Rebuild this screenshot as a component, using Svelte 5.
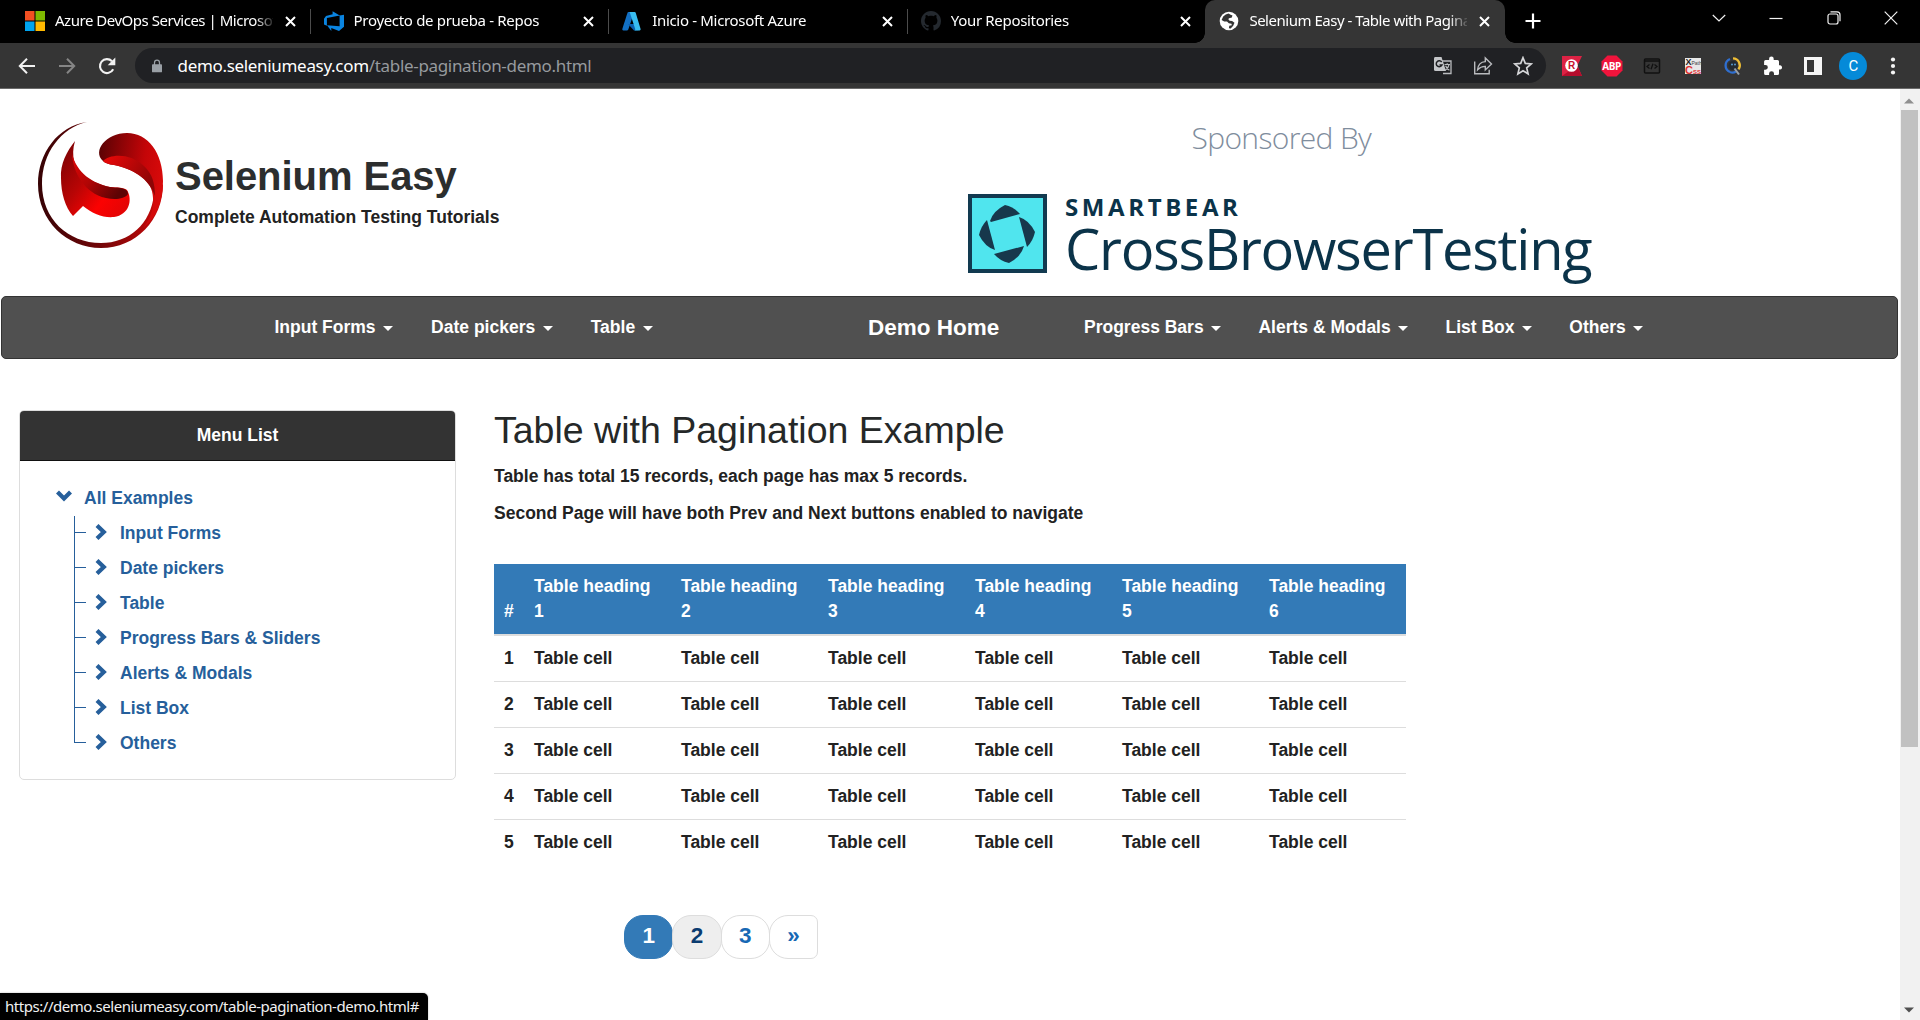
<script>
  const tabs = [
    { icon: 'ms', title: 'Azure DevOps Services | Microsoft', long: true },
    { icon: 'devops', title: 'Proyecto de prueba - Repos' },
    { icon: 'azure', title: 'Inicio - Microsoft Azure' },
    { icon: 'github', title: 'Your Repositories' },
    { icon: 'globe', title: 'Selenium Easy - Table with Pagination', active: true, long: true }
  ];
  const navLeft = ['Input Forms', 'Date pickers', 'Table'];
  const navRight = ['Progress Bars', 'Alerts & Modals', 'List Box', 'Others'];
  const menu = ['Input Forms', 'Date pickers', 'Table', 'Progress Bars & Sliders', 'Alerts & Modals', 'List Box', 'Others'];
  const cols = [1, 2, 3, 4, 5, 6];
  const rows = [1, 2, 3, 4, 5];
</script>

<div class="window">
  <header class="tabstrip">
    {#each tabs as tab}
      <div class="tab" class:active={tab.active}>
        <span class="favicon">
          {#if tab.icon === 'ms'}
            <svg width="20" height="20" viewBox="0 0 20 20"><path fill="#f25022" d="M0 0h9.5v9.5H0z" /><path fill="#7fba00" d="M10.5 0H20v9.5h-9.5z" /><path fill="#00a4ef" d="M0 10.5h9.5V20H0z" /><path fill="#ffb900" d="M10.5 10.5H20V20h-9.5z" /></svg>
          {:else if tab.icon === 'devops'}
            <svg width="20" height="20" viewBox="0 0 20 20"><path fill="#0a84e0" d="M20 3.7v12.1l-5 4.1-7.7-2.8v2.8L3 14.2l12.6 1V4.4zM15.700 4.500 8.600 0.300v2.900L2 5.100 0 7.700v5.800l2.900 1.200V6.900z" /></svg>
          {:else if tab.icon === 'azure'}
            <svg width="20" height="20" viewBox="0 0 20 20"><path fill="#1270c4" d="M6.500 1h5.700L6.300 18.600q-.3.800-1.100.8H1.300Q0 19.400.3 18.100L5.500 1.800Q5.800 1 6.500 1z" /><path fill="#0a60b0" d="M6 13h8l2.500 6.300L12 19.400z" /><path fill="#38bdf0" d="M7 1h5.700q.7 0 1 .8l4.900 16.300q.3 1.300-1 1.300h-5.200q1.200-.3.800-1.500L7.900 1.700Q7.700 1 7 1z" /></svg>
          {:else if tab.icon === 'github'}
            <svg width="20" height="20" viewBox="0 0 16 16"><path fill="#24292f" d="M8 0C3.580 0 0 3.580 0 8c0 3.540 2.290 6.530 5.470 7.590.4.070.55-.17.55-.38 0-.19-.01-.82-.01-1.490-2.010.37-2.530-.49-2.690-.94-.09-.23-.48-.94-.82-1.130-.28-.15-.68-.52-.01-.53.63-.01 1.080.58 1.230.82.72 1.210 1.870.87 2.330.66.07-.52.28-.87.51-1.070-1.780-.2-3.640-.89-3.640-3.950 0-.87.31-1.590.82-2.150-.08-.2-.36-1.020.08-2.120 0 0 .67-.21 2.200.82.64-.18 1.320-.27 2-.27s1.360.09 2 .27c1.530-1.040 2.200-.82 2.200-.82.44 1.100.16 1.920.08 2.120.51.56.82 1.270.82 2.150 0 3.070-1.870 3.750-3.650 3.950.29.25.54.73.54 1.480 0 1.070-.01 1.930-.01 2.200 0 .21.15.46.55.38A8.010 8.010 0 0 0 16 8c0-4.420-3.580-8-8-8z" /></svg>
          {:else}
            <svg width="20" height="20" viewBox="0 0 20 20"><circle cx="10" cy="10" r="9.300" fill="#fff" /><path fill="#353535" d="M9.500 2.600q-3 .6-5.300 2.900l-1.600 3.600 2.600 1.400 2.800.1 1.800 1.700 2.700.4.300 1.600-2.500.4-.4 2.500 1.800.2 2.500-2.700 1.300-3-2.400-1.700-2.500-.2-1.400-1.800 1.400-1.100 2-.2.900-2.100-1.900-.9z" /></svg>
          {/if}
        </span>
        <span class="tab-title" class:long={tab.long}>{tab.title}</span>
        <svg class="tab-close" width="11" height="11" viewBox="0 0 11 11"><path d="M1 1l9 9M10 1l-9 9" stroke="#fff" stroke-width="2" /></svg>
      </div>
    {/each}
    <svg class="plus" width="16" height="16" viewBox="0 0 16 16"><path d="M8 .5v15M.5 8h15" stroke="#fff" stroke-width="2.200" /></svg>
    <div class="controls">
      <svg width="14" height="14" viewBox="0 0 14 14"><path d="M.8 4 7 10l6.200-6" /></svg>
      <svg width="14" height="14" viewBox="0 0 14 14"><path d="M.5 7.500h13" /></svg>
      <svg width="14" height="14" viewBox="0 0 14 14"><rect x="1" y="3" width="10" height="10" rx="2" /><path d="M3.500.8H10q3 0 3 3v6.500" /></svg>
      <svg width="14" height="14" viewBox="0 0 14 14"><path d="M.7.700l12.600 12.600M13.300.700.700 13.300" /></svg>
    </div>
  </header>

  <div class="toolbar">
    <svg class="history" width="18" height="18" viewBox="0 0 18 18"><path d="M17 9H2M9 1.800 1.800 9 9 16.200" fill="none" stroke="#f1f1f1" stroke-width="2" /></svg>
    <svg class="history" width="18" height="18" viewBox="0 0 18 18"><path d="M1 9h15M9 1.800 16.200 9 9 16.200" fill="none" stroke="#858585" stroke-width="2" /></svg>
    <svg class="history" width="18" height="18" viewBox="0 0 18 18"><path d="M15.200 12.300A7 7 0 1 1 14 4.200" fill="none" stroke="#f1f1f1" stroke-width="2.100" /><path d="M17.300.5v7.700H9.700z" fill="#f1f1f1" /></svg>
    <div class="omnibox">
      <svg class="lock" width="10" height="14" viewBox="0 0 12 16"><path d="M3 7V4a3 3 0 0 1 6 0v3" fill="none" stroke="#9aa0a6" stroke-width="1.500" /><rect y="6" width="12" height="9.500" rx="1" fill="#9aa0a6" /></svg>
      <span class="url">demo.seleniumeasy.com<i>/table-pagination-demo.html</i></span>
      <div class="omni-icons">
        <svg width="20" height="20" viewBox="0 0 20 20"><path d="M8 5h10v12.500H10" fill="none" stroke="#b9bbbe" stroke-width="1.300" /><path d="M2 1h6.500l4.500 14H2.500Q1 15 1 13.500V2.500Q1 1 2 1z" fill="#c4c6c9" /><path d="M8.700 6A3 3 0 1 0 9 9H6.500" fill="none" stroke="#202124" stroke-width="1.500" /><path d="M11.500 8.500h5.500M14.200 7.300v1.200M12.300 14.200q3.200-2 3.700-5.500M12.600 9.800q1 2.800 3.800 4.400" fill="none" stroke="#b9bbbe" stroke-width="1.200" /></svg>
        <svg width="20" height="20" viewBox="0 0 20 20"><g fill="none" stroke="#b9bbbe" stroke-width="1.400"><path d="M1.700 5.500v12.300h14.500v-4" /><path d="M12.300 2v3.600Q5.300 6 4.600 13.700q3.200-3.400 7.700-3.300v3.500l6.200-5.900z" /></g></svg>
        <svg width="20" height="20" viewBox="0 0 20 20"><path d="M10 1.700l2.300 5.700 6 .5-4.600 4 1.400 6-5.100-3.200-5.100 3.200 1.400-6-4.600-4 6-.5z" fill="none" stroke="#d5d6d8" stroke-width="1.700" /></svg>
      </div>
    </div>
    <div class="extensions">
      <svg width="22" height="22" viewBox="0 0 22 22"><path d="M1 1h20l-4.500 9.500L21 21H1z" fill="#dc2244" /><path d="M1 21 16 10.500 21 21z" fill="#b50d2c" /><circle cx="10.500" cy="10.500" r="6.300" fill="#fff" /><text x="7" y="14.300" class="ext-r">R</text></svg>
      <svg width="22" height="22" viewBox="0 0 22 22"><path d="M6.500.5h9l6 6v9l-6 6h-9l-6-6v-9z" fill="#f0143c" /><text x="1.300" y="14.500" class="ext-abp">ABP</text></svg>
      <svg width="22" height="22" viewBox="0 0 22 22"><rect x="3.500" y="4" width="15" height="14" rx="1" fill="none" stroke="#111" stroke-width="1.500" /><path d="M3 6h16M8.500 9.500l-2.500 2 2.500 2M13.500 9.500l2.500 2-2.500 2M12 8.800l-2 5.500" fill="none" stroke="#111" stroke-width="1.300" /></svg>
      <svg width="22" height="22" viewBox="0 0 22 22"><rect x="3" y="3" width="16" height="16" fill="#e8e8e8" /><text x="3.500" y="10" class="ext-x">X</text><text x="9.500" y="10" class="ext-path">Path</text><text x="3" y="19" class="ext-css">C<tspan class="ext-ss">SS</tspan></text></svg>
      <svg width="22" height="22" viewBox="0 0 22 22"><g fill="none" stroke-width="2.300"><path d="M8 17A7 7 0 0 1 8 4" stroke="#2f6fd0" /><path d="M11 3.300a7 7 0 0 1 5.500 11" stroke="#f0bf35" /><path d="M8 17q3 1.500 6-.5" stroke="#2f6fd0" /></g><circle cx="11" cy="10.500" r="4.500" fill="#232a30" /><circle cx="10" cy="9.500" r="1" fill="#5a9cd0" /><circle cx="13" cy="9.500" r="1" fill="#5a9cd0" /><path d="M12.500 13.500l4.500 6" stroke="#9aa0a6" stroke-width="2" /></svg>
      <svg width="22" height="22" viewBox="0 0 22 22"><path fill="#fff" d="M18.300 10.300H17V6.400q0-1.500-1.500-1.500h-3.800V3.800a2.300 2.300 0 0 0-4.600 0v1.100H3.600q-1.500 0-1.500 1.500v3.500h1.300a2.400 2.400 0 0 1 0 4.900H2.100v3.600q0 1.500 1.500 1.500h3.500v-1.300a2.400 2.400 0 0 1 4.900 0v1.300h3.500q1.500 0 1.500-1.500v-3.800h1.300a2.200 2.200 0 0 0 0-4.300z" /></svg>
      <svg width="22" height="22" viewBox="0 0 22 22"><path fill="#f5f5f5" fill-rule="evenodd" d="M2 2h18v18H2zM5 5v12h7V5z" /></svg>
      <span class="avatar">C</span>
      <svg width="22" height="22" viewBox="0 0 22 22"><g fill="#f5f5f5"><circle cx="10" cy="4.500" r="2.100" /><circle cx="10" cy="11" r="2.100" /><circle cx="10" cy="17.500" r="2.100" /></g></svg>
    </div>
  </div>

  <div class="viewport">
    <main class="page">
      <div class="masthead">
        <svg class="logo" width="126" height="126" viewBox="0 0 126 126">
          <defs>
            <linearGradient id="ring" x1="0" y1="0" x2="1" y2="0"><stop offset="0" stop-color="#360305" /><stop offset=".5" stop-color="#730608" /><stop offset="1" stop-color="#cc0808" /></linearGradient>
            <linearGradient id="top" x1="0" y1=".2" x2="1" y2=".4"><stop offset="0" stop-color="#5c0204" /><stop offset=".7" stop-color="#c40508" /><stop offset="1" stop-color="#d80a0a" /></linearGradient>
            <linearGradient id="fold" x1="0" y1="0" x2="1" y2=".5"><stop offset="0" stop-color="#ee0808" /><stop offset="1" stop-color="#8c0506" /></linearGradient>
            <linearGradient id="left" x1="0" y1=".1" x2="1" y2=".9"><stop offset="0" stop-color="#7c0204" /><stop offset=".4" stop-color="#b80505" /><stop offset=".7" stop-color="#fb0202" /><stop offset="1" stop-color="#e00505" /></linearGradient>
            <linearGradient id="under" x1="0" y1="0" x2="1" y2=".6"><stop offset="0" stop-color="#e00606" /><stop offset=".5" stop-color="#b00505" /><stop offset="1" stop-color="#5d0304" /></linearGradient>
          </defs>
          <path fill="url(#ring)" d="M49 0C20 4 0 31 0 62c0 37 29 64 63 64 35 0 62-28 62-64l-9 10c-3 30-25 49-53 49C30 121 4 97 4 62 4 31 23 6 49 0z" />
          <path fill="url(#top)" d="M65 39C54 29 68 11 89 11c21 0 36 20 36 48 0 22-8 38-20 47 8-10 11-20 10-30C115 58 96 47 76 43q-8-1-11-4z" />
          <path fill="url(#fold)" d="M65 39c6-7 28-9 42 6 7 7 10 16 10 29C111 56 94 47 76 43q-8-1-11-4z" />
          <path fill="url(#left)" d="M37 19C29 29 22 42 23 56c0 15 4 29 12 38l10-10c10 8 20 12 31 11 15-2 19-17 13-27-4-3-9-2-17-3C54 61 28 50 37 19z" />
          <path fill="url(#under)" d="M34 32c1 18 12 39 34 44 9 2 19 1 22-4q0-3-2-4c-4-3-9-2-16-3C54 61 39 51 34 32z" />
        </svg>
        <div class="brand">
          <h1>Selenium Easy</h1>
          <p>Complete Automation Testing Tutorials</p>
        </div>
        <div class="sponsor">
          <div class="sponsored">Sponsored By</div>
          <div class="sponsor-row">
            <svg width="79" height="79" viewBox="0 0 79 79"><rect x="2" y="2" width="75" height="75" fill="#50e5ee" stroke="#123a50" stroke-width="4" /><g fill="#17384c"><path d="M22 27q3-10 15-16 9 2 15 9L23 28z" /><path d="M51 23q10 3 16 15-2 9-8 15z" /><path d="M56 52q-3 11-15 17-9-2-15-9z" /><path d="M27 56q-10-3-16-15 2-9 8-15z" /></g></svg>
            <div class="sponsor-name">
              <div class="smartbear">SMARTBEAR</div>
              <div class="cbt">CrossBrowserTesting</div>
            </div>
          </div>
        </div>
      </div>

      <nav class="navbar">
        <div class="nav-left">
          {#each navLeft as item}<a>{item}<b class="caret"></b></a>{/each}
        </div>
        <a class="home">Demo Home</a>
        <div class="nav-right">
          {#each navRight as item}<a>{item}<b class="caret"></b></a>{/each}
        </div>
      </nav>

      <div class="content">
        <aside class="panel">
          <div class="panel-head">Menu List</div>
          <div class="tree">
            <div class="root"><svg width="16" height="12" viewBox="0 0 16 12"><path d="M1.500 2 8 8.500 14.500 2" fill="none" stroke="#265f9b" stroke-width="4.200" /></svg>All Examples</div>
            <ul>
              {#each menu as item}
                <li><svg width="12" height="16" viewBox="0 0 12 16"><path d="M2 1.500 8.800 8 2 14.500" fill="none" stroke="#265f9b" stroke-width="4.200" /></svg>{item}</li>
              {/each}
            </ul>
          </div>
        </aside>

        <section class="example">
          <h2>Table with Pagination Example</h2>
          <p>Table has total 15 records, each page has max 5 records.</p>
          <p>Second Page will have both Prev and Next buttons enabled to navigate</p>
          <table>
            <thead>
              <tr><th class="num">#</th>{#each cols as c}<th>Table heading<br />{c}</th>{/each}</tr>
            </thead>
            <tbody>
              {#each rows as r}
                <tr><td>{r}</td>{#each cols as c}<td>Table cell</td>{/each}</tr>
              {/each}
            </tbody>
          </table>
          <div class="pagination">
            <span class="current">1</span><span class="hover">2</span><span>3</span><span class="next">»</span>
          </div>
        </section>
      </div>
    </main>
    <div class="scrollbar">
      <svg width="10" height="6" viewBox="0 0 10 6"><path d="M0 5.500 5 .5l5 5z" fill="#8f8f8f" /></svg>
      <div class="thumb"></div>
      <svg class="down" width="10" height="6" viewBox="0 0 10 6"><path d="M0 .5 5 5.500l5-5z" fill="#505050" /></svg>
    </div>
  </div>
  <div class="status">https://demo.seleniumeasy.com/table-pagination-demo.html#</div>
</div>

<style>
  :global(body) { margin: 0; overflow: hidden; }
  * { box-sizing: border-box; }
  svg { display: block; flex: none; }
  .window { position: relative; width: 1920px; height: 1020px; display: flex; flex-direction: column; overflow: hidden; background: #fff; font-family: "Liberation Sans", Arial, sans-serif; }

  .tabstrip { height: 43px; flex: none; display: flex; background: #000; padding-left: 11px; }
  .tab { width: 298.600px; height: 43px; display: flex; align-items: center; padding: 0 15px 1px 14px; position: relative; flex: none; }
  .tab:not(.active)::after { content: ""; position: absolute; right: -1px; top: 9px; width: 1px; height: 25px; background: #4c4c4c; }
  .tab:nth-child(4)::after { display: none; }
  .tab.active { background: #353535; border-radius: 10px 10px 0 0; width: 300px; }
  .tab.active::before, .tab.active::after { content: ""; position: absolute; bottom: 0; width: 10px; height: 10px; }
  .tab.active::before { left: -10px; background: radial-gradient(circle at 0 0, #000 9.500px, #353535 10px); }
  .tab.active::after { right: -10px; background: radial-gradient(circle at 100% 0, #000 9.500px, #353535 10px); }
  .favicon { width: 20px; flex: none; }
  .tab-title { margin: -2px 0 0 10px; width: 218px; flex: none; overflow: hidden; white-space: nowrap; color: #fff; font: 15px "Noto Sans", sans-serif; letter-spacing: -.32px; -webkit-mask-image: linear-gradient(90deg, #000 200px, transparent 221px); mask-image: linear-gradient(90deg, #000 200px, transparent 221px); }
  .tab-title.long { letter-spacing: -.48px; }
  .tab-close { margin-left: 11.500px; }
  .plus { margin: 13px 0 0 20px; }
  .controls { margin-left: auto; display: flex; gap: 43.300px; padding: 11px 22px 0 0; }
  .controls svg { fill: none; stroke: #f2f2f2; stroke-width: 1.200; }

  .toolbar { height: 46px; flex: none; display: flex; align-items: center; background: #353535; border-bottom: 1px solid #6a6a6a; padding-left: 18px; }
  .history { margin-right: 22px; }
  .omnibox { margin-left: -3px; width: 1411px; height: 35px; flex: none; border-radius: 18px; background: #202124; display: flex; align-items: center; padding: 0 13px 0 17px; }
  .url { margin: -1px 0 0 15.500px; color: #fff; font: 17px "Noto Sans", sans-serif; letter-spacing: -.32px; white-space: nowrap; }
  .url i { font-style: normal; color: #969a9e; }
  .omni-icons { margin-left: auto; display: flex; gap: 20px; }
  .extensions { display: flex; align-items: center; gap: 18.200px; margin-left: 15px; }
  .avatar { width: 28px; height: 28px; margin: 0 -3px; border-radius: 50%; background: #058ad8; color: #fff; font: 15px/28px Roboto, sans-serif; text-align: center; }
  .ext-r { font: bold 10px "Liberation Sans"; fill: #c8102e; }
  .ext-abp { font: bold 10px "Open Sans"; fill: #fff; letter-spacing: -.4px; }
  .ext-x { font: bold 9px "Liberation Sans"; fill: #222; }
  .ext-path { font: 5px "Liberation Sans"; fill: #444; }
  .ext-css { font: bold 11px "Liberation Sans"; fill: #e03030; }
  .ext-ss { font-size: 6px; }

  .viewport { flex: 1; display: flex; min-height: 0; }
  .page { width: 1900px; flex: none; padding: 0 2px 0 1px; color: #222; }
  .masthead { height: 207px; display: flex; padding-left: 37px; }
  .logo { margin-top: 33px; }
  .brand { margin-left: 11px; padding-top: 62px; width: 793px; }
  h1 { margin: 0; font: bold 40px/50px "Liberation Sans", sans-serif; letter-spacing: -.05px; color: #2c2e2e; }
  .brand p { margin: 4px 0 0; font: bold 17.500px/25px "Liberation Sans", sans-serif; }
  .sponsor { color: #0b3349; white-space: nowrap; }
  .sponsored { margin: 24px 0 0 223.500px; font: 300 30px/50px "Open Sans", sans-serif; letter-spacing: -.65px; color: #7f8d9d; }
  .sponsor-row { display: flex; margin-top: 31px; }
  .sponsor-name { margin-left: 18px; }
  .smartbear { margin-top: -1px; font: 700 24px/28px "Open Sans", sans-serif; letter-spacing: 3.600px; }
  .cbt { margin-top: -1px; font: 400 56px/56px "Open Sans", sans-serif; letter-spacing: -1.250px; }

  .navbar { height: 63px; display: flex; align-items: center; border: 1px solid #333; border-radius: 5px; background: #505050; color: #fff; font: bold 17.500px/25px "Liberation Sans", sans-serif; white-space: nowrap; }
  .nav-left { width: 866px; padding-left: 272.500px; display: flex; gap: 38px; flex: none; }
  .home { font-size: 22.500px; width: 216px; flex: none; }
  .nav-right { display: flex; gap: 37.300px; }
  .nav-left a, .nav-right a { display: flex; align-items: center; }
  .caret { margin: 2px 0 0 7.500px; border: 5px solid transparent; border-top-color: #fff; border-bottom: 0; }

  .content { display: flex; padding: 51px 0 0 18px; align-items: flex-start; }
  .panel { width: 437px; height: 370px; border: 1px solid #ddd; border-radius: 5px; flex: none; font: bold 17.500px/25px "Liberation Sans", sans-serif; }
  .panel-head { height: 50px; line-height: 49px; border-radius: 4px 4px 0 0; background: #333; border-bottom: 1px solid #111; color: #fff; text-align: center; }
  .tree { padding: 20px 0 0 36px; color: #265f9b; }
  .root { height: 35px; line-height: 35px; display: flex; gap: 12px; }
  .root svg { margin-top: 9px; }
  ul { list-style: none; margin: 0 0 0 18px; padding: 0; background: linear-gradient(#265f9b, #265f9b) no-repeat 0 0 / 1px 227px; }
  li { height: 35px; line-height: 35px; display: flex; align-items: center; }
  li::before { content: ""; width: 12px; height: 1px; background: #265f9b; margin: -3px 9px 0 0; }
  li svg { margin: -4px 13px 0 0; }

  .example { margin-left: 38px; width: 912px; color: #222; font: bold 17.500px/25px "Liberation Sans", sans-serif; white-space: nowrap; }
  h2 { margin: 0 0 13px; font: 400 37.500px/41px "Liberation Sans", sans-serif; color: #252828; }
  .example p { margin: 0 0 12px; }
  table { margin-top: 38px; width: 912px; border-collapse: collapse; table-layout: fixed; }
  th, td { padding: 10px; text-align: left; font-weight: bold; }
  th { background: #337ab7; color: #fff; height: 71px; vertical-align: bottom; border-bottom: 2px solid #ddd; }
  .num { width: 30px; }
  td { height: 46px; vertical-align: top; border-top: 1px solid #ddd; }
  .pagination { display: flex; margin: 49px 0 0 130px; font-size: 22.500px; line-height: 40px; text-align: center; color: #1768b4; }
  .pagination span { width: 49.300px; height: 44px; margin-right: -1px; border: 1px solid #ddd; border-radius: 19px; background: #fff; }
  .pagination .current { background: #337ab7; border-color: #337ab7; color: #fff; }
  .pagination .hover { background: #eee; color: #0b3c70; }
  .pagination .next { border-radius: 19px 7px 7px 19px; }

  .scrollbar { width: 20px; background: #f1f1f1; display: flex; flex-direction: column; align-items: center; padding: 9px 2px 7px 0; }
  .thumb { width: 17px; height: 637px; margin-top: 6px; background: #c1c1c1; }
  .down { margin-top: auto; }
  .status { position: absolute; left: 0; bottom: 0; width: 428px; height: 27px; border-radius: 0 5px 0 0; background: #000; color: #f0f0f0; box-shadow: 0 0 2px #aaa; padding-left: 5px; font: 15px/26px "Noto Sans", sans-serif; letter-spacing: -.46px; white-space: nowrap; }
</style>
